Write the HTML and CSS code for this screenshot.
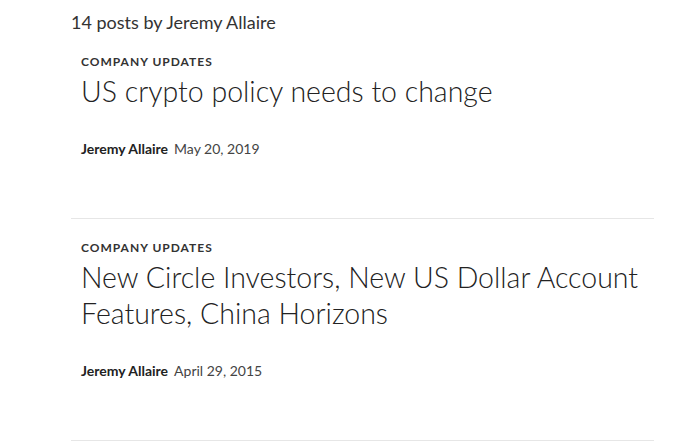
FILE: index.html
```html
<!DOCTYPE html>
<html>
<head>
<meta charset="utf-8">
<link rel="stylesheet" href="styles.css">
</head>
<body>
<main class="list">
  <h2 class="count">14 posts by Jeremy Allaire</h2>
  <article class="post">
    <div class="cat">COMPANY UPDATES</div>
    <h1 class="title">US crypto policy needs to change</h1>
    <div class="meta"><span class="author">Jeremy Allaire</span><span class="date">May 20, 2019</span></div>
  </article>
  <article class="post">
    <div class="cat">COMPANY UPDATES</div>
    <h1 class="title">New Circle Investors, New US Dollar Account Features, China Horizons</h1>
    <div class="meta"><span class="author">Jeremy Allaire</span><span class="date">April 29, 2015</span></div>
  </article>
</main>
</body>
</html>
```

FILE: styles.css
```css
html, body { margin: 0; padding: 0; background: #fff; }
body { font-family: "Lato", "Open Sans", sans-serif; color: #222; }
.list { width: 583px; margin-left: 71px; }
.count { margin: 0; padding-top: 10px; font-size: 18px; font-weight: 400; line-height: 24px; color: #333; }
.post { padding: 21px 0 60px 10px; border-bottom: 1px solid #e6e6e6; }
.post + .post { padding-top: 22px; }
.cat { font-size: 12px; font-weight: 700; letter-spacing: 1px; line-height: 14px; color: #333; }
.title { margin: 0; font-size: 28.5px; font-weight: 300; line-height: 36px; color: #222; padding-top: 4px; }
.meta { margin-top: 31px; font-size: 14px; line-height: 18px; display: flex; gap: 6px; }
.author { font-weight: 700; color: #222; }
.date { color: #444; }
```
